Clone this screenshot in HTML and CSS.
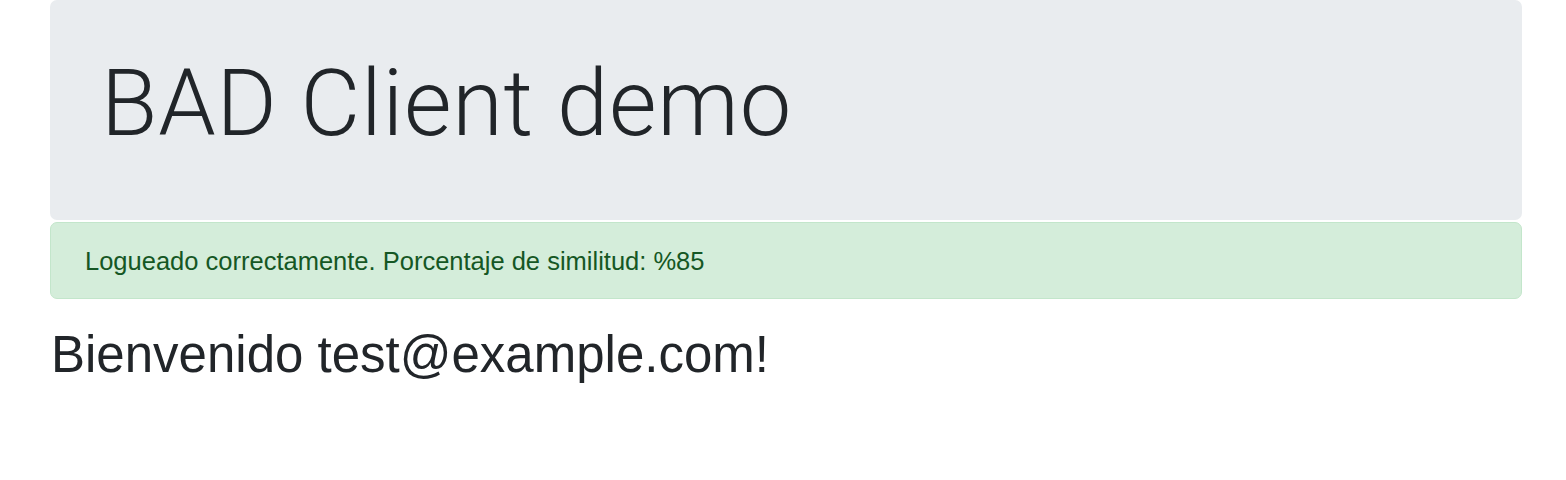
FILE: index.html
```html
<!DOCTYPE html>
<html lang="es">
<head>
<meta charset="utf-8">
<title>BAD Client demo</title>
<link rel="stylesheet" href="styles.css">
</head>
<body>
<div class="container">
  <div class="jumbotron">
    <h1 class="display">BAD Client demo</h1>
  </div>
  <div class="alert alert-success">Logueado correctamente. Porcentaje de similitud: %85</div>
  <h2 class="welcome">Bienvenido test@example.com!</h2>
</div>
</body>
</html>
```

FILE: styles.css
```css
html, body {
  margin: 0;
  padding: 0;
  background: #ffffff;
  color: #212529;
  font-family: "Liberation Sans", Arial, sans-serif;
}

.container {
  width: 1472px;
  margin-left: 50px;
  display: flex;
  flex-direction: column;
}

.jumbotron {
  background: #e9ecef;
  border-radius: 7px;
  height: 220px;
  box-sizing: border-box;
  padding: 49px 48px 0 51px;
}

.display {
  margin: 0;
  font-family: Roboto, "Liberation Sans", sans-serif;
  font-weight: 300;
  font-size: 92px;
  line-height: 1.2;
  letter-spacing: 0.75px;
  color: #212529;
}

.alert {
  margin-top: 2px;
  border: 1px solid #c3e6cb;
  border-radius: 7px;
  background: #d4edda;
  color: #155724;
  font-size: 25.5px;
  line-height: 36px;
  padding: 20px 34px 19px;
}

.welcome {
  margin: 25px 0 0 1px;
  font-weight: 400;
  font-size: 51px;
  line-height: 1.2;
  color: #212529;
}
```
